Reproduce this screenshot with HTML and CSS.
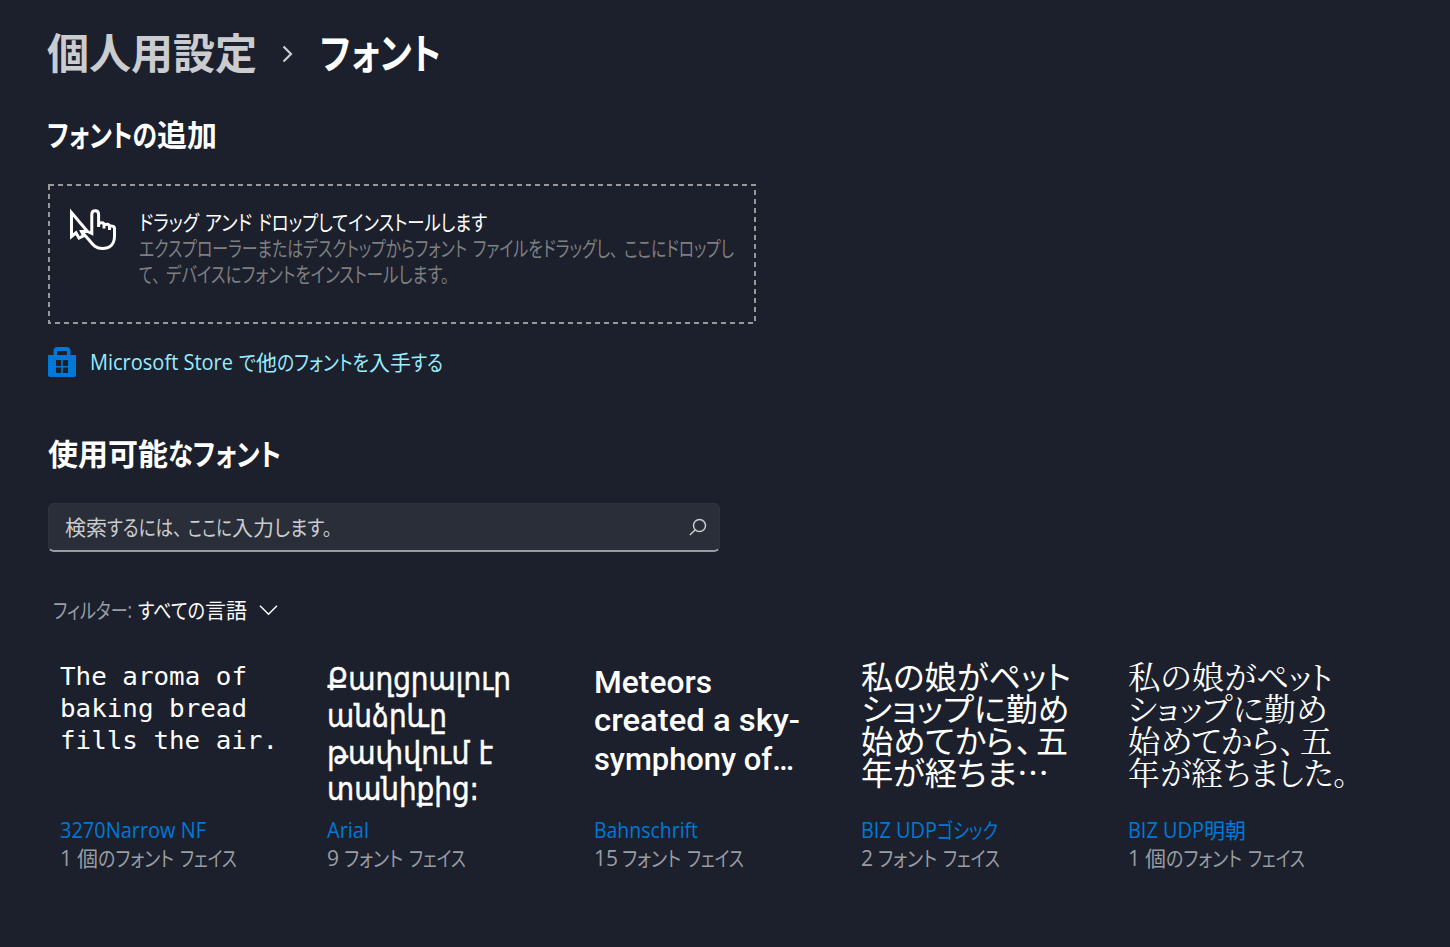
FILE: index.html
```html
<!DOCTYPE html>
<html lang="ja">
<head>
<meta charset="utf-8">
<title>フォント</title>
<link rel="stylesheet" href="styles.css">
</head>
<body>
<main class="page">
  <h1 class="crumbs">
    <span class="parent"><span data-w="210">個人用設定</span></span>
    <svg class="sep" width="14" height="18" viewBox="0 0 14 18"><path d="M2.5 1.5 L10 9 L2.5 16.5"/></svg>
    <span class="current"><span data-w="121">フォント</span></span>
  </h1>
  <h2 class="head add"><span data-w="110">フォントの</span><span data-w="60">追加</span></h2>
  <section class="drop">
    <svg class="outline" width="708" height="140"><rect x="1" y="1" width="706" height="138"/></svg>
    <svg class="hand" width="48" height="42" viewBox="0 0 48 42"><path d="M18.5 22.5 L2.5 3.5 V27.5 L7 23.8 L10 29 L14.5 26.8 L12.5 22.5 H18.5 L22.8 24.5 V5.5 Q22.8 1.8 26.2 1.8 Q29.6 1.8 29.6 5.5 V18 M29.6 14.5 Q35 12.3 35 16 V19.5 M35 16 Q40 13.8 40.5 17.5 V21 M40.5 17.2 Q45.5 16.3 45.5 19.5 V27 C45.5 36 40 39.5 33.5 39.5 C27 39.5 24 36 20.5 31.5 L13.5 23.5"/></svg>
    <div class="drop-text">
      <p class="strong"><span data-w="60">ドラッグ</span><span class="word" data-w="47">アンド</span><span class="word" data-w="229">ドロップしてインストールします</span></p>
      <p class="muted"><span data-w="328">エクスプローラーまたはデスクトップからフォント</span><span class="word" data-w="145">ファイルをドラッグし、</span><span class="word" data-w="110">ここにドロップし</span></p>
      <p class="muted"><span data-w="21">て、</span><span class="word" data-w="283">デバイスにフォントをインストールします。</span></p>
    </div>
  </section>
  <a class="store">
    <svg width="28" height="30" viewBox="0 0 28 30"><path fill-rule="evenodd" d="M0 8H5.5V4Q5.5 0 9.5 0H18.5Q22.5 0 22.5 4V8H28V28Q28 30 26 30H2Q0 30 0 28ZM9 8H19V5Q19 4 18 4H10Q9 4 9 5ZM8 13V19H13.2V13ZM14.8 13V19H20V13ZM8 20.5V26H13.2V20.5ZM14.8 20.5V26H20V20.5Z"/></svg>
    <span class="label"><span data-w="143">Microsoft Store</span><span class="word" data-w="17">で</span><span data-w="21">他</span><span data-w="92">のフォントを</span><span data-w="42">入手</span><span data-w="32">する</span></span>
  </a>
  <h2 class="head avail"><span data-w="120">使用可能</span><span data-w="113">なフォント</span></h2>
  <div class="search">
    <span class="hint"><span data-w="42">検索</span><span data-w="75">するには、</span><span class="word" data-w="44">ここに</span><span data-w="42">入力</span><span data-w="58">します。</span></span>
    <svg width="18" height="18" viewBox="0 0 18 18"><circle cx="10.5" cy="7.5" r="6"/><path d="M6.3 11.7 L0.8 17"/></svg>
  </div>
  <div class="filter">
    <span class="key"><span data-w="79">フィルター:</span></span>
    <span class="value"><span data-w="67">すべての</span><span data-w="42">言語</span></span>
    <svg width="20" height="12" viewBox="0 0 20 12"><path d="M1 1.8 L9.5 10.3 L18 1.8"/></svg>
  </div>
  <section class="fonts">
    <article class="font">
      <div class="preview p-3270"><span data-w="187">The aroma of</span><br><span data-w="187">baking bread</span><br><span data-w="218">fills the air.</span></div>
      <h3><span data-w="146">3270Narrow NF</span></h3>
      <p><span class="num">1</span><span data-w="21">個</span><span data-w="76">のフォント</span><span class="word" data-w="57">フェイス</span></p>
    </article>
    <article class="font">
      <div class="preview p-arial"><span data-w="184">Քաղցրալուր</span><br><span data-w="120">անձրևը</span><br><span data-w="166">թափվում է</span><br><span data-w="152">տանիքից:</span></div>
      <h3><span data-w="42">Arial</span></h3>
      <p><span class="num">9</span><span data-w="59">フォント</span><span class="word" data-w="57">フェイス</span></p>
    </article>
    <article class="font">
      <div class="preview p-bahn"><span data-w="118">Meteors</span><br><span data-w="206">created a sky-</span><br><span data-w="200">symphony of…</span></div>
      <h3><span data-w="104">Bahnschrift</span></h3>
      <p><span class="num two">15</span><span data-w="59">フォント</span><span class="word" data-w="57">フェイス</span></p>
    </article>
    <article class="font">
      <div class="preview p-gothic"><span data-w="96">私の娘</span><span data-w="114">がペット</span><br><span data-w="145">ショップに</span><span data-w="63">勤め</span><br><span data-w="153">始めてから</span><span class="comma">、</span><span data-w="32">五</span><br><span data-w="96">年が経</span><span data-w="60">ちま</span><span data-w="32">…</span></div>
      <h3><span data-w="76">BIZ UDP</span><span data-w="61">ゴシック</span></h3>
      <p><span class="num">2</span><span data-w="59">フォント</span><span class="word" data-w="57">フェイス</span></p>
    </article>
    <article class="font">
      <div class="preview p-mincho"><span data-w="96">私の娘</span><span data-w="109">がペット</span><br><span data-w="136">ショップに</span><span data-w="63">勤め</span><br><span data-w="150">始めてから</span><span class="comma">、</span><span data-w="32">五</span><br><span data-w="95">年が経</span><span data-w="126">ちました。</span></div>
      <h3><span data-w="76">BIZ UDP</span><span data-w="42">明朝</span></h3>
      <p><span class="num">1</span><span data-w="21">個</span><span data-w="76">のフォント</span><span class="word" data-w="57">フェイス</span></p>
    </article>
  </section>
</main>
<script src="main.js"></script>
</body>
</html>
```
FILE: main.js
```js
// Condense each run of text to its advance width, given in data-w.
document.querySelectorAll('[data-w]').forEach(function (run) {
  var target = Number(run.dataset.w);
  var natural = run.getBoundingClientRect().width;
  run.style.width = natural + 'px';
  run.style.marginRight = target - natural + 'px';
  run.style.transform = 'scaleX(' + target / natural + ')';
});
```
FILE: styles.css
```css
* { box-sizing: border-box; margin: 0; padding: 0; font-feature-settings: "palt"; }
body {
  background: #1b202c;
  color: #fff;
  font: 21px/26px "Open Sans", "Noto Sans CJK JP", sans-serif;
  white-space: nowrap;
}
[data-w] { display: inline-block; transform-origin: 0 50%; }
.word { margin-left: 6px; }
.page { display: flex; flex-direction: column; width: 1450px; height: 947px; padding: 22px 48px 0; overflow: hidden; }
.crumbs { display: flex; align-items: center; height: 58px; font: 700 42px/58px "Noto Sans CJK JP", sans-serif; }
.parent { width: 233px; margin-left: -1px; color: #cbccd0; }
.sep { margin: 5px 25px 0 1px; fill: none; stroke: #cbccd0; stroke-width: 2.2; }
svg { display: block; flex: none; overflow: visible; }
.head { height: 40px; font: 700 30px/40px "Noto Sans CJK JP", sans-serif; }
.add { margin: 33px 0 0 -1px; }
.drop { position: relative; display: flex; gap: 22px; width: 708px; height: 140px; margin-top: 31px; padding: 25px 21px; }
.outline { position: absolute; left: 0; top: 0; fill: none; stroke: #999; stroke-width: 2; stroke-dasharray: 5 4; }
.hand { fill: none; stroke: #fff; stroke-width: 3; }
.drop p { height: 26px; }
.muted { color: #7f7f80; }
.store { display: flex; align-items: center; gap: 14px; height: 30px; margin-top: 23px; color: #99ebff; }
.store svg { fill: #0078d7; }
.avail { margin-top: 55px; }
.search { display: flex; align-items: center; justify-content: space-between; width: 672px; height: 49px; margin-top: 31px; padding: 0 12px 0 16px; border: 1px solid #2e333f; border-bottom: 2px solid #9a9da3; border-radius: 6px; background: #292e39; color: #cbccd0; }
.search svg { fill: none; stroke: #cbccd0; stroke-width: 1.5; }
.filter { display: flex; align-items: center; height: 30px; margin: 43px 0 0 5px; }
.filter .key { width: 85px; color: #9a9da3; }
.filter .value { width: 121px; }
.filter svg { fill: none; stroke: #fff; stroke-width: 1.5; }
.fonts { display: grid; grid-template-columns: repeat(5, 267px); margin: 34px 0 0 12px; }
.preview { height: 157px; }
.p-3270 { padding-top: 2px; font: 24px/32px "DejaVu Sans Mono", monospace; }
.p-arial { padding-top: 2px; font: 32px/36.8px "DejaVu Sans", sans-serif; -webkit-text-stroke: 0.5px #fff; }
.p-bahn { padding-top: 4px; font: 500 32px/38.4px Roboto, sans-serif; }
.p-gothic { font: 400 32px/32px "Noto Sans CJK JP", sans-serif; }
.p-mincho { font: 400 32px/32px "Noto Serif CJK JP", "Noto Sans CJK JP", serif; }
.comma { display: inline-block; width: 22px; padding-left: 2px; }
.font h3 { height: 28px; font-size: 21px; font-weight: 400; line-height: 28px; color: #0078d7; }
.font p { height: 28px; line-height: 28px; color: #9a9da3; }
.num { display: inline-block; width: 17px; }
.two { width: 28px; }
```
